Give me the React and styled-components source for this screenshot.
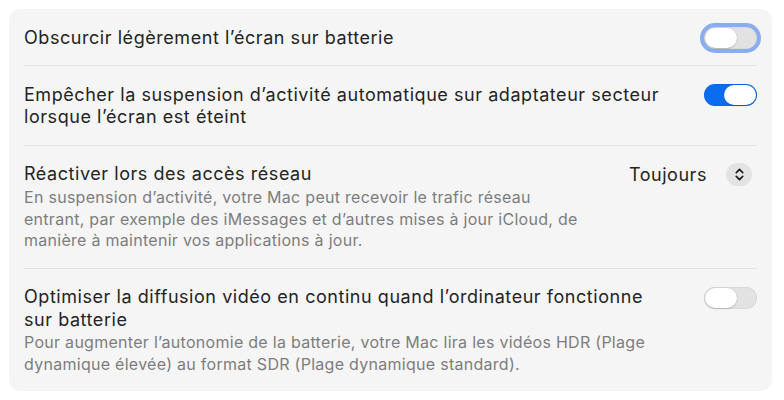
import React from 'react';
import styled, { createGlobalStyle } from 'styled-components';

const GlobalStyle = createGlobalStyle`
  html, body {
    margin: 0;
    padding: 0;
    background: #ffffff;
  }
  body {
    font-family: Inter, 'Noto Sans', 'Liberation Sans', sans-serif;
    -webkit-font-smoothing: antialiased;
  }
`;

const Page = styled.div`
  padding: 9px 12px 11px 9px;
`;

const Panel = styled.section`
  background: #f5f5f5;
  border-radius: 11px;
  padding: 0 15px;
`;

const Row = styled.div`
  display: flex;
  align-items: flex-start;
  justify-content: space-between;
  gap: 16px;
  padding: 17.5px 0 16px;
  border-bottom: ${(p) => (p.$last ? 'none' : '1px solid #e4e4e4')};
`;

const TextBlock = styled.div`
  display: flex;
  flex-direction: column;
  flex: 1;
  min-width: 0;
`;

const HeadLine = styled.div`
  display: flex;
  align-items: center;
  justify-content: space-between;
`;

const Title = styled.div`
  font-size: 18px;
  letter-spacing: 0.55px;
  line-height: 22.5px;
  color: #242424;
  white-space: nowrap;
`;

const Description = styled.div`
  margin-top: 1px;
  font-size: 16px;
  letter-spacing: 0.28px;
  line-height: 21.5px;
  color: #7d7d7d;
  white-space: nowrap;
`;

const Track = styled.button`
  flex: none;
  position: relative;
  width: 53px;
  height: 22px;
  margin-top: 0.5px;
  padding: 0;
  border: none;
  border-radius: 11px;
  background: ${(p) => (p.$on ? '#0a6cf0' : '#e2e2e2')};
  box-shadow: ${(p) =>
    p.$focused
      ? 'inset 0 0 0 0.5px rgba(0,0,0,0.08), 0 0 0 4px #88aef1'
      : 'inset 0 0 0 0.5px rgba(0,0,0,0.08)'};
  cursor: pointer;
`;

const Knob = styled.span`
  position: absolute;
  top: 1px;
  left: ${(p) => (p.$on ? '20px' : '1px')};
  width: 32px;
  height: 20px;
  border-radius: 10px;
  background: #ffffff;
  box-shadow: 0 0.5px 1.5px rgba(0, 0, 0, 0.28);
`;

const Picker = styled.div`
  display: flex;
  align-items: center;
  gap: 19px;
  margin-right: 5px;
  font-size: 18px;
  letter-spacing: 0.55px;
  color: #242424;
`;

const Stepper = styled.span`
  display: flex;
  align-items: center;
  justify-content: center;
  width: 26px;
  height: 23px;
  border-radius: 11.5px;
  background: #e3e3e3;
`;

function Toggle({ on, focused }) {
  return (
    <Track $on={on} $focused={focused} aria-pressed={on}>
      <Knob $on={on} />
    </Track>
  );
}

function Chevrons() {
  return (
    <svg width="11" height="15" viewBox="0 0 11 15" fill="none">
      <path
        d="M2.3 5.6 L5.5 2.4 L8.7 5.6 M2.3 9.4 L5.5 12.6 L8.7 9.4"
        stroke="#1f1f1f"
        strokeWidth="1.7"
        strokeLinecap="round"
        strokeLinejoin="round"
      />
    </svg>
  );
}

export default function App() {
  return (
    <>
      <GlobalStyle />
      <Page>
        <Panel>
          <Row>
            <TextBlock>
              <Title>Obscurcir légèrement l’écran sur batterie</Title>
            </TextBlock>
            <Toggle on={false} focused />
          </Row>

          <Row>
            <TextBlock>
              <Title>
                Empêcher la suspension d’activité automatique sur adaptateur secteur
                <br />
                lorsque l’écran est éteint
              </Title>
            </TextBlock>
            <Toggle on />
          </Row>

          <Row>
            <TextBlock>
              <HeadLine>
                <Title>Réactiver lors des accès réseau</Title>
                <Picker>
                  Toujours
                  <Stepper>
                    <Chevrons />
                  </Stepper>
                </Picker>
              </HeadLine>
              <Description>
                En suspension d’activité, votre Mac peut recevoir le trafic réseau
                <br />
                entrant, par exemple des iMessages et d’autres mises à jour iCloud, de
                <br />
                manière à maintenir vos applications à jour.
              </Description>
            </TextBlock>
          </Row>

          <Row $last>
            <TextBlock>
              <Title>
                Optimiser la diffusion vidéo en continu quand l’ordinateur fonctionne
                <br />
                sur batterie
              </Title>
              <Description>
                Pour augmenter l’autonomie de la batterie, votre Mac lira les vidéos HDR (Plage
                <br />
                dynamique élevée) au format SDR (Plage dynamique standard).
              </Description>
            </TextBlock>
            <Toggle on={false} />
          </Row>
        </Panel>
      </Page>
    </>
  );
}
